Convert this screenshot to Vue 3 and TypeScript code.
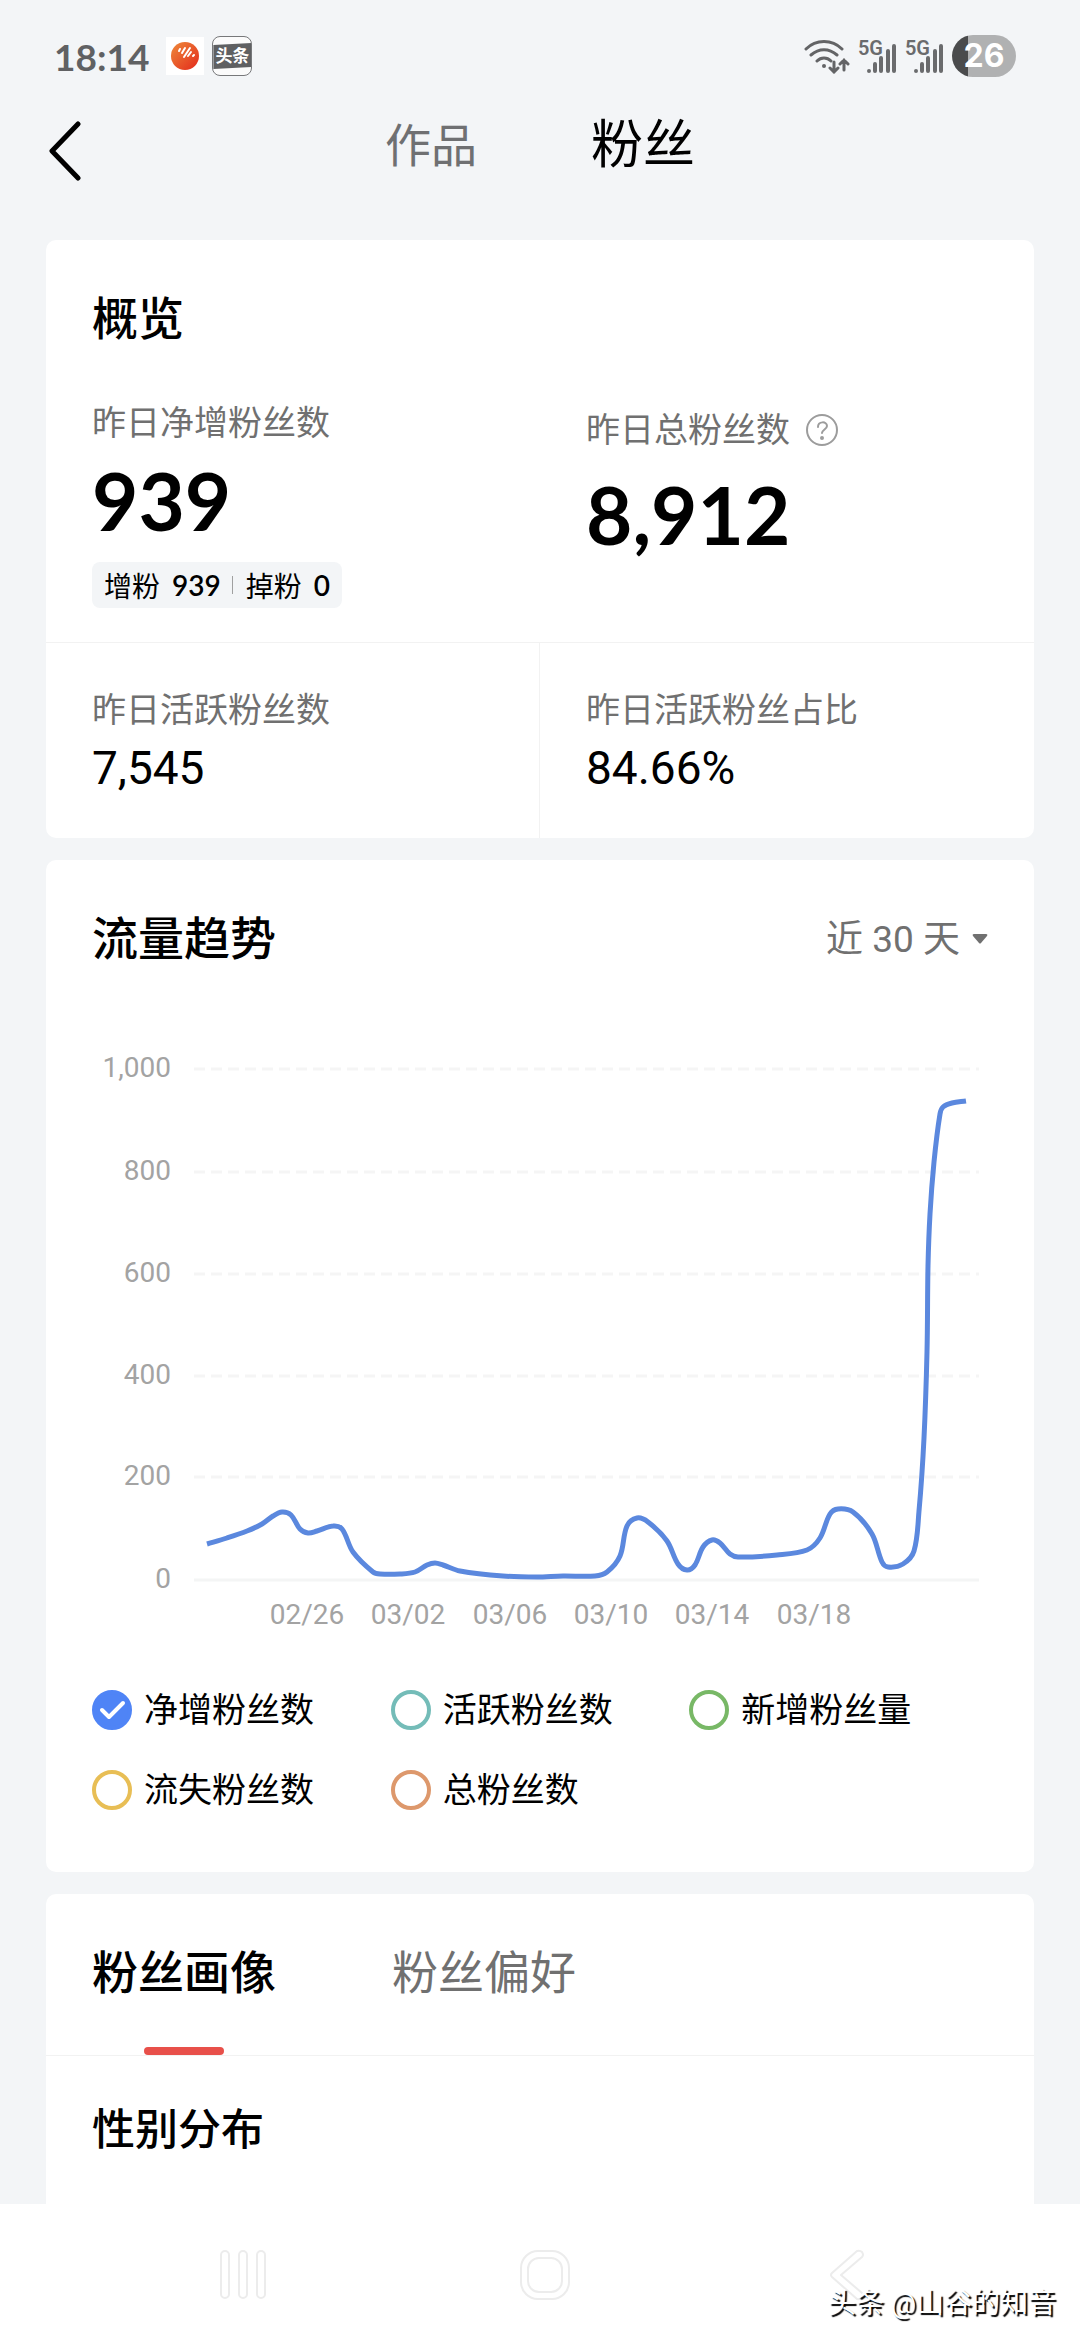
<script setup lang="ts">
import { computed, ref } from 'vue'

interface Series {
  id: string
  label: string
  color: string
}

const headerTabs = ['作品', '粉丝']
const activeHeader = ref('粉丝')

const series: Series[] = [
  { id: 'net', label: '净增粉丝数', color: '#4f84f6' },
  { id: 'active', label: '活跃粉丝数', color: '#74bcb8' },
  { id: 'new', label: '新增粉丝量', color: '#78b866' },
  { id: 'lost', label: '流失粉丝数', color: '#e8be55' },
  { id: 'total', label: '总粉丝数', color: '#dd986c' },
]
const selected = ref<string[]>(['net'])

const range = ref('30')

const profileTabs = ['粉丝画像', '粉丝偏好']
const activeProfile = ref('粉丝画像')

// Chart geometry, in viewBox units
const gridLines = [
  { label: '1,000', y: 30 },
  { label: '800', y: 133 },
  { label: '600', y: 235 },
  { label: '400', y: 337 },
  { label: '200', y: 438 },
  { label: '0', y: 541 },
]
const dates = ['02/26', '03/02', '03/06', '03/10', '03/14', '03/18'].map((label, i) => ({
  label,
  x: 215 + Math.round(i * 101.3),
}))

const points: [number, number][] = [
  [115, 505], [135, 499], [155, 492], [170, 485], [181, 477], [190, 473], [199, 476], [208, 490],
  [216, 494], [225, 492], [241, 487], [250, 490], [261, 513], [281, 533], [288, 535], [308, 535],
  [323, 533], [335, 526], [343, 524], [351, 526], [368, 532], [411, 537], [445, 538], [471, 537],
  [503, 537], [515, 533], [528, 517], [535, 487], [545, 479], [556, 483], [575, 502], [586, 525],
  [595, 531], [603, 526], [611, 508], [620, 501], [628, 504], [638, 515], [646, 518], [685, 516],
  [715, 511], [728, 499], [738, 475], [746, 470], [761, 473], [780, 495], [790, 523], [796, 528],
  [811, 525], [822, 512], [827, 472], [832, 399], [835, 313], [836, 227], [838, 175], [842, 123],
  [848, 75], [851, 68], [860, 64], [874, 62],
]

// Cubic path through the points; tangents shortened at uneven spacing
const linePath = computed(() => {
  let d = `M${points[0][0]} ${points[0][1]}`
  const dist = (a: number[], b: number[]) => Math.hypot(b[0] - a[0], b[1] - a[1])
  for (let i = 0; i < points.length - 1; i++) {
    const p0 = points[Math.max(i - 1, 0)]
    const p1 = points[i]
    const p2 = points[i + 1]
    const p3 = points[Math.min(i + 2, points.length - 1)]
    const seg = dist(p1, p2) / 3
    const l1 = dist(p0, p2)
    const l2 = dist(p1, p3)
    const c1 = [p1[0] + ((p2[0] - p0[0]) / l1) * seg, p1[1] + ((p2[1] - p0[1]) / l1) * seg]
    const c2 = [p2[0] - ((p3[0] - p1[0]) / l2) * seg, p2[1] - ((p3[1] - p1[1]) / l2) * seg]
    d += `C${c1.map((v) => v.toFixed(1)).join(' ')} ${c2.map((v) => v.toFixed(1)).join(' ')} ${p2.join(' ')}`
  }
  return d
})
</script>

<template>
  <div class="page">
    <div class="status">
      <span class="time">18:14</span>
      <svg class="app-icon" width="38" height="38" viewBox="0 0 38 38" aria-hidden="true">
        <defs>
          <linearGradient id="ball" x1="0" y1="0" x2="1" y2="1">
            <stop offset="0" stop-color="#ee8a3a" />
            <stop offset="1" stop-color="#e3291c" />
          </linearGradient>
        </defs>
        <rect width="38" height="38" fill="#fff" />
        <circle cx="19" cy="19" r="14" fill="url(#ball)" />
        <g stroke="#fff" stroke-width="2" stroke-linecap="round">
          <path d="M13 14l1-2M16 16l3-5M18 20l6-9M22 19l3-4M27 19l1-1" />
        </g>
      </svg>
      <span class="toutiao"><span>头条</span></span>
      <div class="status-right">
        <svg width="46" height="36" viewBox="0 0 46 36" fill="none" stroke="#636466" stroke-width="3" stroke-linecap="round" aria-hidden="true">
          <path d="M2 11C12 1 28 1 38 11M7 17c8-7 18-7 26 0M13 23c4-4 10-4 14 0" />
          <circle cx="20" cy="28" r="2" fill="#636466" stroke="none" />
          <path d="M30 24v10M26 30l4 4 4-4M40 32V22M36 26l4-4 4 4" />
        </svg>
        <span v-for="n in 2" :key="n" class="signal">
          <span class="net">5G</span>
          <svg width="30" height="30" viewBox="0 0 30 30" fill="none" stroke="#6a6b6d" stroke-width="4" stroke-linecap="round" aria-hidden="true">
            <path d="M2 27v0M8 20v7M14 14v13M21 7v20M27 2v25" />
          </svg>
        </span>
        <span class="battery">26</span>
      </div>
    </div>

    <header class="header">
      <button class="back" type="button" aria-label="返回">
        <svg width="36" height="62" viewBox="0 0 36 62" fill="none" stroke="#000" stroke-width="5" stroke-linecap="round" stroke-linejoin="round">
          <path d="M32 3L6 30l26 27" />
        </svg>
      </button>
      <nav class="header-tabs">
        <button
          v-for="tab in headerTabs"
          :key="tab"
          type="button"
          :class="{ active: tab === activeHeader }"
          @click="activeHeader = tab"
        >{{ tab }}</button>
      </nav>
    </header>

    <main class="content">
      <section class="card">
        <h2 class="title">概览</h2>
        <div class="metrics">
          <div class="metric">
            <div class="label">昨日净增粉丝数</div>
            <div class="big">939</div>
            <div class="pill">
              <span>增粉</span><b>939</b><i></i><span>掉粉</span><b>0</b>
            </div>
          </div>
          <div class="metric">
            <div class="label with-help">
              昨日总粉丝数
              <button type="button" class="help" aria-label="说明">
                <svg width="32" height="32" viewBox="0 0 32 32" fill="none" stroke="#9c9c9c" stroke-width="2" stroke-linecap="round">
                  <circle cx="16" cy="16" r="15" />
                  <path d="M12 13c0-6 9-6 9-1 0 3-5 4-5 7" />
                  <circle cx="16" cy="24" r="1" fill="#9c9c9c" />
                </svg>
              </button>
            </div>
            <div class="big">8,912</div>
          </div>
        </div>
        <div class="metrics second">
          <div class="metric">
            <div class="label">昨日活跃粉丝数</div>
            <div class="mid">7,545</div>
          </div>
          <div class="metric">
            <div class="label">昨日活跃粉丝占比</div>
            <div class="mid">84.66%</div>
          </div>
        </div>
      </section>

      <section class="card trend">
        <div class="trend-head">
          <h2 class="title">流量趋势</h2>
          <label class="range">
            <select v-model="range" aria-label="时间范围">
              <option value="30">近 30 天</option>
            </select>
            <svg width="16" height="12" viewBox="0 0 16 12" aria-hidden="true">
              <path d="M2 1h12q2 0 1 2l-6 7q-1 1-2 0L1 3Q0 1 2 1z" fill="#707070" />
            </svg>
          </label>
        </div>
        <svg class="chart" viewBox="0 0 896 600" role="img" aria-label="净增粉丝数">
          <g v-for="line in gridLines" :key="line.label">
            <line
              x1="102" x2="887" :y1="line.y" :y2="line.y"
              :class="line.label === '0' ? 'axis' : 'grid'"
            />
            <text x="79" :y="line.y + 8" text-anchor="end">{{ line.label }}</text>
          </g>
          <text v-for="d in dates" :key="d.label" :x="d.x" y="585" text-anchor="middle">{{ d.label }}</text>
          <path :d="linePath" class="line" />
        </svg>
        <div class="legend">
          <label v-for="s in series" :key="s.id" class="legend-item">
            <span class="check">
              <input
                v-model="selected"
                type="checkbox"
                :value="s.id"
                :style="{ borderColor: s.color, backgroundColor: selected.includes(s.id) ? s.color : 'transparent' }"
              />
              <svg v-if="selected.includes(s.id)" width="40" height="40" viewBox="0 0 40 40" fill="none" stroke="#fff" stroke-width="4" stroke-linecap="round" stroke-linejoin="round" aria-hidden="true">
                <path d="M10 20l7 7 14-14" />
              </svg>
            </span>
            <span class="legend-text">{{ s.label }}</span>
          </label>
        </div>
      </section>

      <section class="card profile">
        <div class="profile-tabs">
          <button
            v-for="tab in profileTabs"
            :key="tab"
            type="button"
            :class="{ active: tab === activeProfile }"
            @click="activeProfile = tab"
          >{{ tab }}</button>
        </div>
        <h3 class="subtitle">性别分布</h3>
      </section>
    </main>

    <footer class="navbar">
      <button type="button" aria-label="最近任务">
        <svg width="48" height="52" viewBox="0 0 48 52" fill="none" stroke="#ececec" stroke-width="2">
          <rect x="2" y="2" width="8" height="47" rx="4" />
          <rect x="20" y="2" width="8" height="47" rx="4" />
          <rect x="38" y="2" width="8" height="47" rx="4" />
        </svg>
      </button>
      <button type="button" aria-label="主屏幕">
        <svg width="52" height="52" viewBox="0 0 52 52" fill="none" stroke="#ececec" stroke-width="2">
          <rect x="2" y="2" width="48" height="48" rx="17" />
          <rect x="9" y="9" width="34" height="34" rx="11" />
        </svg>
      </button>
      <button type="button" aria-label="返回上一页">
        <svg width="36" height="52" viewBox="0 0 36 52" fill="none" stroke="#ececec" stroke-width="2" stroke-linejoin="round">
          <path d="M28 2L3 24q-2 2 0 4l25 22q4 1 6-2 1-2-1-4L12 26 33 8q2-2 0-5-2-2-5-1z" />
        </svg>
      </button>
      <span class="watermark">头条 @山谷的知音</span>
    </footer>
  </div>
</template>

<style>
body {
  margin: 0;
  background: #f3f5f7;
}
</style>

<style scoped>
.page {
  display: flex;
  flex-direction: column;
  min-height: 100vh;
  background: #f3f5f7;
  color: #000;
  font-family: Roboto, "Noto Sans CJK SC", sans-serif;
  font-size: 34px;
}
button {
  padding: 0;
  border: 0;
  background: none;
  color: inherit;
  font: inherit;
}
h2,
h3 {
  margin: 0;
}

/* Status bar */
.status {
  display: flex;
  align-items: center;
  height: 112px;
  padding: 0 64px 0 54px;
}
.time {
  color: #606163;
  font-family: Lato, sans-serif;
  font-size: 37px;
  font-weight: 700;
}
.app-icon {
  margin-left: 17px;
}
.toutiao {
  display: flex;
  align-items: center;
  box-sizing: border-box;
  width: 40px;
  height: 40px;
  margin-left: 8px;
  border: 1px solid #77787a;
  border-radius: 8px;
  background: #fbfbfb;
}
.toutiao span {
  flex: 1;
  background: #5f6062;
  clip-path: polygon(0 8%, 100% 0, 100% 92%, 0 100%);
  color: #fff;
  font-size: 17px;
  font-weight: 700;
  line-height: 26px;
  text-align: center;
}
.status-right {
  display: flex;
  align-items: center;
  gap: 8px;
  margin-left: auto;
}
.signal {
  display: flex;
  align-items: flex-end;
  height: 36px;
}
.signal .net {
  align-self: flex-start;
  margin-right: -16px;
  color: #6a6b6d;
  font-size: 20px;
  font-weight: 600;
  line-height: 20px;
}
.battery {
  width: 64px;
  border-radius: 21px;
  background: linear-gradient(90deg, #4a4b4c 16px, #b0b1b2 16px);
  color: #fff;
  font-family: Inter, sans-serif;
  font-size: 32px;
  font-weight: 700;
  line-height: 42px;
  text-align: center;
}

/* Header */
.header {
  display: flex;
  height: 128px;
  padding: 0 46px;
}
.back {
  display: flex;
  align-items: center;
  width: 36px;
  height: 80px;
}
.header-tabs {
  display: flex;
  flex: 1;
  justify-content: center;
  gap: 114px;
  height: 68px;
  margin-right: 36px;
}
.header-tabs button {
  color: #6f7072;
  font-size: 46px;
  line-height: 68px;
}
.header-tabs .active {
  color: #000;
  font-size: 52px;
}

/* Cards */
.content {
  display: flex;
  flex: 1;
  flex-direction: column;
  gap: 22px;
  padding: 0 46px;
}
.card {
  border-radius: 10px;
  background: #fff;
}
.title {
  padding: 46px 46px 0;
  font-size: 46px;
  font-weight: 500;
  line-height: 66px;
}
.metrics {
  display: grid;
  grid-template-columns: 1fr 1fr;
  padding: 47px 0 34px;
}
.metric {
  padding: 0 46px;
}
.label {
  color: #707070;
  line-height: 48px;
}
.with-help {
  display: flex;
  align-items: center;
  gap: 16px;
  line-height: 62px;
}
.help {
  display: flex;
}
.big {
  font-family: Lato, sans-serif;
  font-size: 80px;
  font-weight: 700;
  line-height: 106px;
}
.mid {
  font-size: 46px;
  line-height: 68px;
}
.pill {
  display: inline-flex;
  align-items: center;
  height: 46px;
  margin-top: 9px;
  padding: 0 12px;
  border-radius: 8px;
  background: #f3f5f7;
  font-size: 28px;
}
.pill b {
  margin-left: 12px;
  font-family: Lato, sans-serif;
  font-weight: 600;
}
.pill i {
  width: 1px;
  height: 18px;
  margin: 0 13px 0 11px;
  background: #a0a0a0;
}
.second {
  padding: 0;
  border-top: 1px solid #f2f2f2;
}
.second .metric {
  padding-top: 43px;
  padding-bottom: 36px;
}
.second .metric:first-child {
  border-right: 1px solid #f2f2f2;
}

/* Trend */
.trend {
  padding-bottom: 42px;
}
.trend-head {
  display: flex;
  align-items: flex-end;
  justify-content: space-between;
}
.range {
  display: flex;
  align-items: center;
  gap: 12px;
  height: 66px;
  padding-right: 46px;
}
.range select {
  padding: 0;
  border: 0;
  appearance: none;
  background: none;
  color: #707070;
  font: inherit;
  font-size: 37px;
}
.chart {
  display: block;
  width: calc(100% - 92px);
  margin: 67px 46px 0;
}
.chart text {
  fill: #a3a3a3;
  font-size: 28px;
}
.grid {
  stroke: #f5f5f5;
  stroke-width: 3;
  stroke-dasharray: 11 6;
}
.axis {
  stroke: #f4f5f5;
  stroke-width: 3;
}
.line {
  fill: none;
  stroke: #5b88de;
  stroke-width: 5;
  stroke-linejoin: round;
}
.legend {
  display: grid;
  grid-template-columns: repeat(3, 1fr);
  margin: 31px 46px 0;
}
.legend-item {
  display: flex;
  align-items: center;
  gap: 12px;
  height: 80px;
}
.legend-text {
  padding-bottom: 6px;
}
.check {
  display: grid;
}
.check input,
.check svg {
  grid-area: 1 / 1;
}
.check svg {
  pointer-events: none;
}
.check input {
  box-sizing: border-box;
  width: 40px;
  height: 40px;
  margin: 0;
  border: 4px solid;
  border-radius: 50%;
  appearance: none;
}

/* Profile */
.profile {
  flex: 1;
  border-radius: 10px 10px 0 0;
}
.profile-tabs {
  display: flex;
  gap: 116px;
  padding: 46px 46px 0;
  border-bottom: 1px solid #f2f2f2;
}
.profile-tabs button {
  display: flex;
  flex-direction: column;
  align-items: center;
  gap: 41px;
  color: #707070;
  font-size: 46px;
  line-height: 66px;
}
.profile-tabs button::after {
  width: 80px;
  height: 8px;
  border-radius: 4px;
  content: "";
}
.profile-tabs .active {
  color: #000;
  font-weight: 500;
}
.profile-tabs .active::after {
  background: #e8504a;
}
.subtitle {
  padding: 41px 46px 38px;
  font-size: 43px;
  font-weight: 500;
  line-height: 66px;
}

/* System navigation */
.navbar {
  position: relative;
  display: flex;
  justify-content: center;
  height: 136px;
  padding-left: 10px;
  background: #fff;
}
.navbar button {
  display: flex;
  align-items: center;
  justify-content: center;
  width: 28vw;
  height: 142px;
}
.watermark {
  position: absolute;
  right: 24px;
  bottom: 16px;
  color: #fff;
  font-size: 28px;
  line-height: 40px;
  text-shadow: 2px 2px 1px #000;
}
</style>
